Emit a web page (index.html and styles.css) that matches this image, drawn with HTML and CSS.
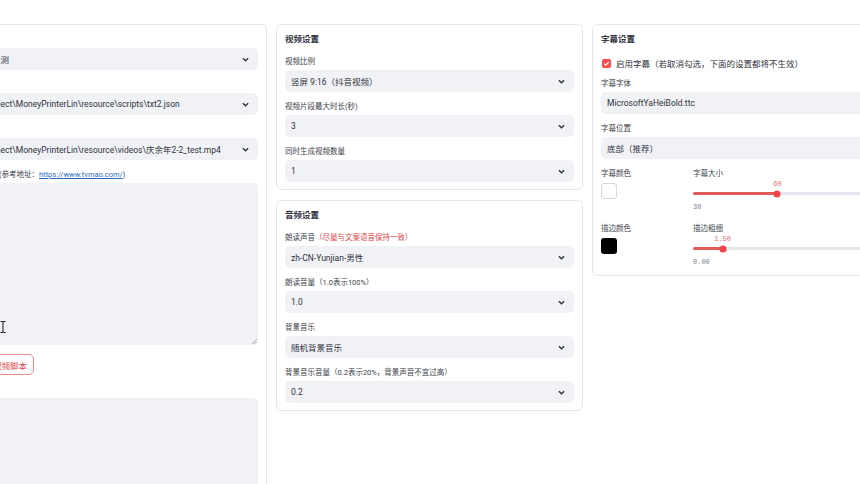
FILE: index.html
```html
<!DOCTYPE html>
<html lang="zh-CN">
<head>
<meta charset="utf-8">
<title>MoneyPrinterLin</title>
<link rel="stylesheet" href="styles.css">
</head>
<body>
<div class="page">
  <div class="columns">
    <section class="card card-left">
      <div class="stack">
        <div class="field">
          <div class="lbl">文案语言</div>
          <div class="select"><span class="val">自动检测</span><svg class="chev" viewBox="0 0 8 5" width="7" height="5"><path d="M1 1l3 3 3-3" fill="none" stroke="#31333f" stroke-width="1.6"/></svg></div>
        </div>
        <div class="field">
          <div class="lbl">文案文件</div>
          <div class="select"><span class="val">D:\project\MoneyPrinterLin\resource\scripts\txt2.json</span><svg class="chev" viewBox="0 0 8 5" width="7" height="5"><path d="M1 1l3 3 3-3" fill="none" stroke="#31333f" stroke-width="1.6"/></svg></div>
        </div>
        <div class="field">
          <div class="lbl">视频文件</div>
          <div class="select"><span class="val">D:\project\MoneyPrinterLin\resource\videos\庆余年2-2_test.mp4</span><svg class="chev" viewBox="0 0 8 5" width="7" height="5"><path d="M1 1l3 3 3-3" fill="none" stroke="#31333f" stroke-width="1.6"/></svg></div>
        </div>
        <div class="field">
          <div class="lbl">视频脚本(参考地址：<a class="link" href="#">https://www.tvmao.com/</a>)</div>
          <div class="textarea tall">
            <svg class="grip" viewBox="0 0 6 6" width="6" height="6"><path d="M1 6L6 1M3.5 6L6 3.5" stroke="#999" stroke-width="0.8"/></svg>
          </div>
        </div>
        <div class="btn-row"><button class="btn">生成视频脚本</button></div>
        <div class="field">
          <div class="lbl faint">视频关键</div>
          <div class="textarea low"></div>
        </div>
      </div>
    </section>

    <div class="mid-col">
      <section class="card">
        <h3 class="card-title">视频设置</h3>
        <div class="stack">
          <div class="field">
            <div class="lbl">视频比例</div>
            <div class="select"><span class="val">竖屏 9:16（抖音视频）</span><svg class="chev" viewBox="0 0 8 5" width="7" height="5"><path d="M1 1l3 3 3-3" fill="none" stroke="#31333f" stroke-width="1.6"/></svg></div>
          </div>
          <div class="field">
            <div class="lbl">视频片段最大时长(秒)</div>
            <div class="select"><span class="val">3</span><svg class="chev" viewBox="0 0 8 5" width="7" height="5"><path d="M1 1l3 3 3-3" fill="none" stroke="#31333f" stroke-width="1.6"/></svg></div>
          </div>
          <div class="field">
            <div class="lbl">同时生成视频数量</div>
            <div class="select"><span class="val">1</span><svg class="chev" viewBox="0 0 8 5" width="7" height="5"><path d="M1 1l3 3 3-3" fill="none" stroke="#31333f" stroke-width="1.6"/></svg></div>
          </div>
        </div>
      </section>
      <section class="card">
        <h3 class="card-title">音频设置</h3>
        <div class="stack">
          <div class="field">
            <div class="lbl">朗读声音<span class="red">（尽量与文案语音保持一致）</span></div>
            <div class="select"><span class="val">zh-CN-Yunjian-男性</span><svg class="chev" viewBox="0 0 8 5" width="7" height="5"><path d="M1 1l3 3 3-3" fill="none" stroke="#31333f" stroke-width="1.6"/></svg></div>
          </div>
          <div class="field">
            <div class="lbl">朗读音量（1.0表示100%）</div>
            <div class="select"><span class="val">1.0</span><svg class="chev" viewBox="0 0 8 5" width="7" height="5"><path d="M1 1l3 3 3-3" fill="none" stroke="#31333f" stroke-width="1.6"/></svg></div>
          </div>
          <div class="field">
            <div class="lbl">背景音乐</div>
            <div class="select"><span class="val">随机背景音乐</span><svg class="chev" viewBox="0 0 8 5" width="7" height="5"><path d="M1 1l3 3 3-3" fill="none" stroke="#31333f" stroke-width="1.6"/></svg></div>
          </div>
          <div class="field">
            <div class="lbl">背景音乐音量（0.2表示20%，背景声音不宜过高）</div>
            <div class="select"><span class="val">0.2</span><svg class="chev" viewBox="0 0 8 5" width="7" height="5"><path d="M1 1l3 3 3-3" fill="none" stroke="#31333f" stroke-width="1.6"/></svg></div>
          </div>
        </div>
      </section>
    </div>

    <section class="card card-right">
      <h3 class="card-title">字幕设置</h3>
      <div class="stack">
        <div class="check-row">
          <svg class="check" viewBox="0 0 9 9" width="9" height="9"><rect width="9" height="9" rx="2" fill="#ff4b4b"/><path d="M2.2 4.6l1.6 1.6 3.1-3.3" fill="none" stroke="#fff" stroke-width="1.2"/></svg>
          <span class="check-text">启用字幕（若取消勾选，下面的设置都将不生效）</span>
        </div>
        <div class="field">
          <div class="lbl">字幕字体</div>
          <div class="select"><span class="val">MicrosoftYaHeiBold.ttc</span><svg class="chev" viewBox="0 0 8 5" width="7" height="5"><path d="M1 1l3 3 3-3" fill="none" stroke="#31333f" stroke-width="1.6"/></svg></div>
        </div>
        <div class="field">
          <div class="lbl">字幕位置</div>
          <div class="select"><span class="val">底部（推荐）</span><svg class="chev" viewBox="0 0 8 5" width="7" height="5"><path d="M1 1l3 3 3-3" fill="none" stroke="#31333f" stroke-width="1.6"/></svg></div>
        </div>
        <div class="rows">
          <div class="pair">
            <div class="field">
              <div class="lbl">字幕颜色</div>
              <div class="swatch white"></div>
            </div>
            <div class="field">
              <div class="lbl">字幕大小</div>
              <div class="slider">
                <div class="s-val-row"><span class="s-val" style="left:42.86%">60</span></div>
                <div class="s-track-area">
                  <div class="s-track"><div class="s-fill" style="width:42.86%"></div><div class="s-thumb" style="left:42.86%"></div></div>
                </div>
                <div class="s-min">30</div>
              </div>
            </div>
          </div>
          <div class="pair">
            <div class="field">
              <div class="lbl">描边颜色</div>
              <div class="swatch black"></div>
            </div>
            <div class="field">
              <div class="lbl">描边粗细</div>
              <div class="slider">
                <div class="s-val-row"><span class="s-val" style="left:15%">1.50</span></div>
                <div class="s-track-area">
                  <div class="s-track"><div class="s-fill" style="width:15%"></div><div class="s-thumb" style="left:15%"></div></div>
                </div>
                <div class="s-min">0.00</div>
              </div>
            </div>
          </div>
        </div>
      </div>
    </section>
  </div>
  <svg class="ibeam" viewBox="0 0 6 12" width="6" height="12"><path d="M0.5 0.5h2l0.5 0.6 0.5-0.6h2M3 1v10M0.5 11.5h2l0.5-0.6 0.5 0.6h2" fill="none" stroke="#111" stroke-width="1"/></svg>
</div>
</body>
</html>
```

FILE: styles.css
```css
* { box-sizing: border-box; margin: 0; padding: 0; }
html, body { width: 860px; height: 484px; overflow: hidden; background: #fff; }
body {
  font-family: Roboto, "Noto Sans CJK SC", sans-serif;
  color: #31333f;
}
.page { position: relative; padding-top: 24px; }
.columns {
  display: grid;
  grid-template-columns: 307px 307px 307px;
  column-gap: 9px;
  margin-left: -40px;
  align-items: start;
}
.mid-col { display: flex; flex-direction: column; gap: 10px; }
.card {
  background: #fff;
  border: 1px solid #e6e6ea;
  border-radius: 6px;
  padding: 0 8px 7px;
}
.card-left { height: 520px; padding-top: 10px; }
.card-right { padding-bottom: 8px; }
.card-title {
  font-size: 8.5px;
  font-weight: 600;
  line-height: 12px;
  margin-top: 8px;
  margin-bottom: 12px;
  color: #31333f;
}
.stack { display: flex; flex-direction: column; gap: 10px; }
.field { display: flex; flex-direction: column; min-width: 0; }
.lbl {
  font-size: 7.5px;
  line-height: 10px;
  height: 10px;
  margin-bottom: 3px;
  color: #3d3f4a;
  white-space: nowrap;
}
.lbl.faint { color: #eceef1; }
.red { color: #e0464a; }
.link { color: #2b6cc4; text-decoration: underline; }
.select {
  height: 22px;
  background: #f0f2f6;
  border-radius: 5px;
  display: flex;
  align-items: center;
  justify-content: space-between;
  padding: 0 9px 0 6px;
  overflow: hidden;
}
.val {
  font-size: 8.5px;
  white-space: nowrap;
  color: #31333f;
}
.chev { flex: none; }
.textarea {
  position: relative;
  background: #f0f2f6;
  border-radius: 5px;
}
.textarea.tall { height: 162px; }
.textarea.low { height: 120px; }
.grip { position: absolute; right: 1px; bottom: 1px; }
.btn-row { display: flex; margin-top: -1px; }
.btn {
  height: 21px;
  padding: 0 6px;
  background: #fff;
  border: 1px solid #f08a8c;
  border-radius: 5px;
  color: #e0464a;
  font-family: Roboto, "Noto Sans CJK SC", sans-serif;
  font-size: 8.5px;
}
.check-row {
  display: flex;
  align-items: center;
  gap: 5px;
  height: 12px;
  padding-left: 1px;
}
.check { flex: none; }
.check-text { font-size: 8.5px; white-space: nowrap; }
.rows { display: flex; flex-direction: column; gap: 12px; }
.pair {
  display: grid;
  grid-template-columns: 83px 1fr;
  column-gap: 9px;
}
.swatch {
  width: 16px;
  height: 16px;
  border-radius: 3px;
  margin-top: 1px;
}
.swatch.white { background: #fff; border: 1px solid #d6d8de; }
.swatch.black { background: #000; }
.slider { margin-top: -2px; }
.s-val-row { position: relative; height: 9px; }
.s-val {
  position: absolute;
  top: 0;
  transform: translateX(-50%);
  font-family: "Liberation Mono", "DejaVu Sans Mono", monospace;
  font-size: 7px;
  line-height: 9px;
  color: #e86a6a;
}
.s-track-area { height: 9px; display: flex; align-items: center; }
.s-track {
  position: relative;
  width: 100%;
  height: 3px;
  border-radius: 2px;
  background: #e4e6eb;
}
.s-fill {
  height: 100%;
  border-radius: 2px;
  background: #e35a5a;
}
.s-thumb {
  position: absolute;
  top: 50%;
  width: 7px;
  height: 7px;
  border-radius: 50%;
  background: #f0444a;
  transform: translate(-50%, -50%);
}
.s-min {
  margin-top: 5px;
  font-family: "Liberation Mono", "DejaVu Sans Mono", monospace;
  font-size: 7px;
  line-height: 9px;
  color: #7d7f88;
}
.ibeam { position: absolute; left: 0; top: 321px; }
```
